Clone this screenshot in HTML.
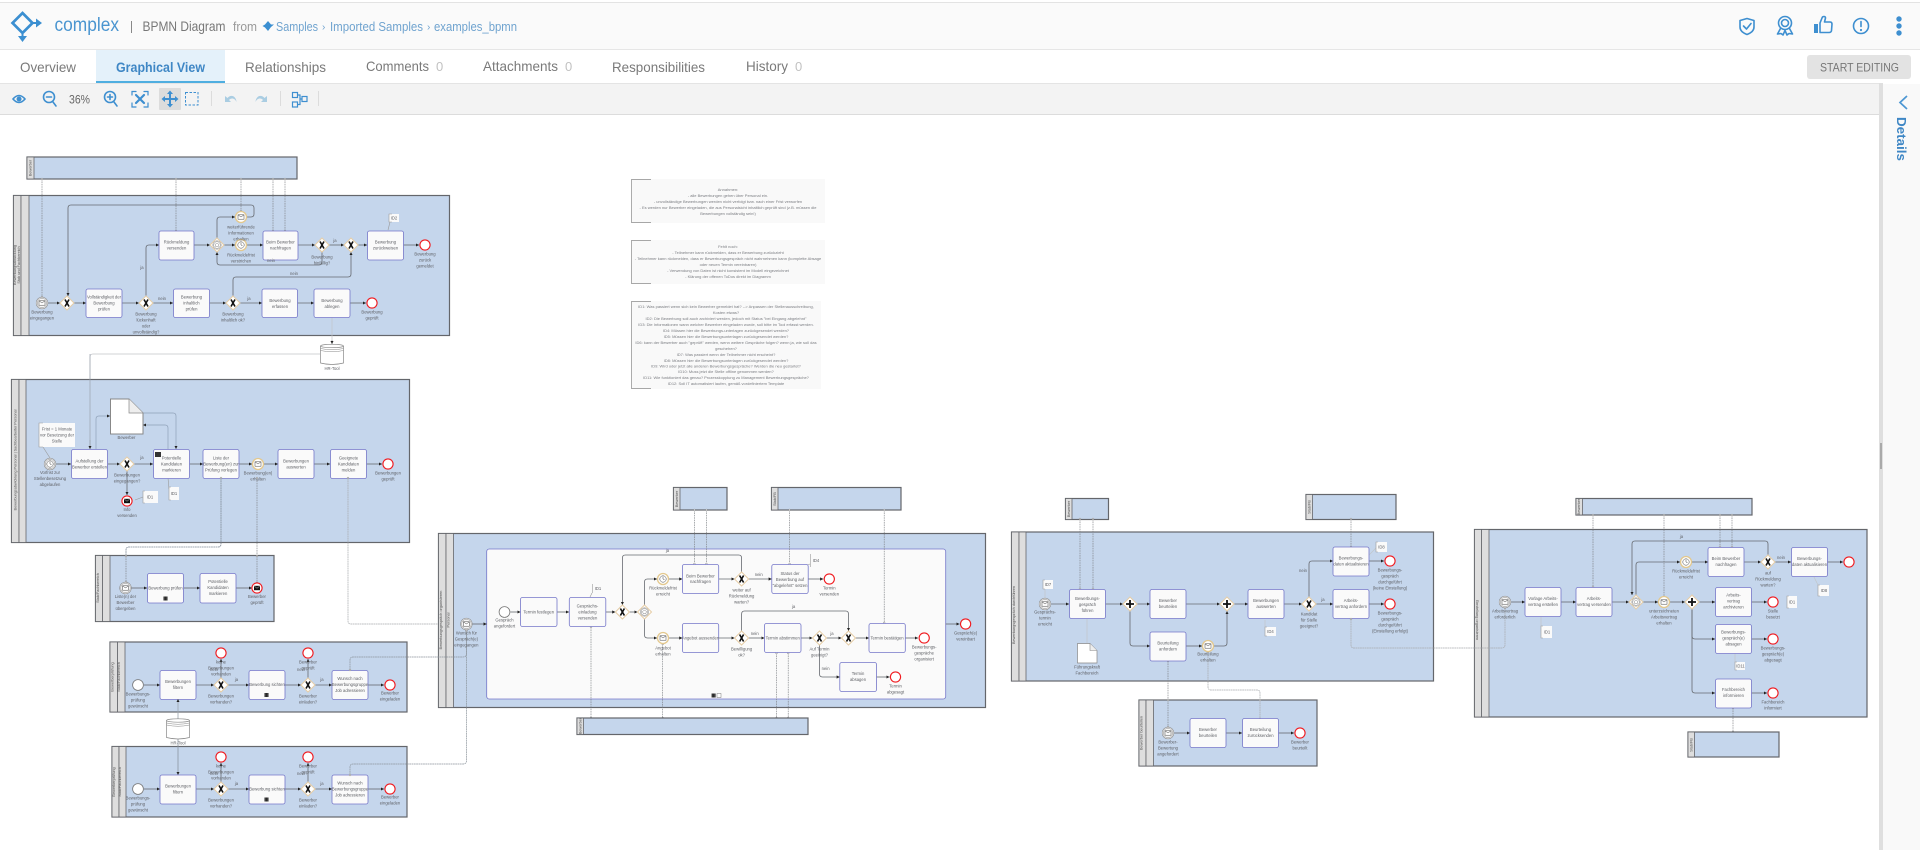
<!DOCTYPE html>
<html lang="de"><head><meta charset="utf-8"><title>complex - BPMN Diagram</title>
<style>
html,body{margin:0;padding:0;width:1920px;height:850px;overflow:hidden;background:#fff}
svg{position:absolute;left:0;top:0}
#d{filter:blur(.3px)}
#d text{font:4.2px "Liberation Sans",sans-serif;fill:#5f6166;text-anchor:middle}
#d .b text{font-size:4px;fill:#7b7d82}
#d text.v{font-size:3.8px;fill:#555}
.p{fill:#c5d6ec;stroke:#64666b;stroke-width:1.2}
.q{fill:#dedede;stroke:#64666b;stroke-width:.8}
.t{fill:#fafafa;stroke:#7577c9;stroke-width:.8}
.f{fill:none;stroke:#666a70;stroke-width:.8;marker-end:url(#a)}
.m{fill:none;stroke:#777a7e;stroke-width:.6;stroke-dasharray:1.6 .8;marker-start:url(#o);marker-mid:url(#o);marker-end:url(#o)}
.l{fill:none;stroke:#c2c5c9;stroke-width:.7}
.ld{fill:none;stroke:#a8abae;stroke-width:.7;stroke-dasharray:1.8 .5;marker-start:url(#o);marker-end:url(#o)}
.n{fill:#fafafa}
.k{fill:none;stroke:#999;stroke-width:.6}
#c text{font-family:"Liberation Sans",sans-serif}
</style></head><body>
<svg id="d" width="1920" height="850" viewBox="0 0 1920 850">
<defs>
<marker id="a" markerUnits="userSpaceOnUse" markerWidth="4" markerHeight="4" refX="3.2" refY="1.6" orient="auto"><path d="M0,0L3.2,1.6L0,3.2z" fill="#222"/></marker>
<marker id="o" markerUnits="userSpaceOnUse" markerWidth="3" markerHeight="3" refX="1.5" refY="1.5"><circle cx="1.5" cy="1.5" r=".9" fill="#fff" stroke="#666" stroke-width=".4"/></marker>
<g id="gx"><polygon points="0,-7 7,0 0,7 -7,0" fill="#fff" stroke="#e6cda6"/><path d="M-2,-3.5L2,3.5M2,-3.5L-2,3.5" stroke="#111" stroke-width="1.6"/></g>
<g id="gp"><polygon points="0,-7 7,0 0,7 -7,0" fill="#fff" stroke="#e6cda6"/><path d="M-4,0H4M0,-4V4" stroke="#111" stroke-width="1.8"/></g>
<g id="ge"><polygon points="0,-7 7,0 0,7 -7,0" fill="#fff" stroke="#e6cda6"/><circle r="4.2" fill="none" stroke="#888" stroke-width=".5"/><circle r="3.3" fill="none" stroke="#888" stroke-width=".5"/><polygon points="0,-2 2,-.5 1.2,1.7 -1.2,1.7 -2,-.5" fill="none" stroke="#888" stroke-width=".5"/></g>
<g id="s"><circle r="5.4" fill="#fff" stroke="#777" stroke-width=".8"/></g>
<g id="e"><circle r="5.1" fill="#fff" stroke="#f01a1f" stroke-width="1.1"/></g>
<g id="env"><rect x="-3" y="-2.2" width="6" height="4.4" fill="#fff" stroke="#444" stroke-width=".5"/><path d="M-3,-2.2L0,0L3,-2.2" fill="none" stroke="#444" stroke-width=".5"/></g>
<g id="clk"><circle r="3.2" fill="#fff" stroke="#444" stroke-width=".5"/><path d="M0,-2.4V0L1.5,.8" fill="none" stroke="#444" stroke-width=".5"/></g>
<g id="sm"><circle r="5.8" fill="#fff" stroke="#888" stroke-width=".6"/><circle r="4.8" fill="#f5f5f5" stroke="#888" stroke-width=".5"/><use href="#env"/></g>
<g id="st"><circle r="5.8" fill="#fff" stroke="#888" stroke-width=".6"/><circle r="4.8" fill="#f5f5f5" stroke="#888" stroke-width=".5"/><use href="#clk"/></g>
<g id="im"><circle r="5.5" fill="#fff" stroke="#e3c88e" stroke-width="1.3"/><use href="#env"/></g>
<g id="it"><circle r="5.5" fill="#fff" stroke="#e3c88e" stroke-width="1.3"/><use href="#clk"/></g>
<g id="em"><circle r="5.1" fill="#fff" stroke="#f01a1f" stroke-width="1.1"/><rect x="-3" y="-2.2" width="6" height="4.4" fill="#111"/><path d="M-3,-2.2L0,.3L3,-2.2" fill="none" stroke="#fff" stroke-width=".4"/></g>
<g id="ds"><path d="M0,2V19Q11.5,22 23,19V2" fill="#fff" stroke="#888" stroke-width=".7"/><ellipse cx="11.5" cy="2" rx="11.5" ry="1.7" fill="#fff" stroke="#888" stroke-width=".7"/><path d="M0,4.5Q11.5,7 23,4.5M0,6.5Q11.5,9 23,6.5" fill="none" stroke="#888" stroke-width=".5"/></g>
<g id="mk"><rect x="-2" y="-2" width="4" height="4" fill="#222"/><path d="M-.7,-2V2M.7,-2V2" stroke="#888" stroke-width=".3"/></g>
</defs>

<!-- Pool Bewerber top -->
<rect class="p" x="27" y="157" width="270" height="22"/><rect class="q" x="27" y="157" width="7" height="22"/>
<text class="v" transform="translate(31.500,168) rotate(-90)">Bewerber</text>

<!-- Pool 1 -->
<rect class="p" x="13.500" y="195.500" width="436" height="140"/><rect class="q" x="13.500" y="195.500" width="7.500" height="140"/><rect class="q" x="21" y="195.500" width="8" height="140"/>
<text class="v" transform="translate(16,265) rotate(-90)">Bewerbungsabwicklung</text><text class="v" transform="translate(20,265) rotate(-90)">Stab und Fachbereich</text>
<g>
<path class="m" d="M42,179V297M176,179V231M241,179V211M273,179V231M285,179V231"/>
<path class="f" d="M48,303H60"/><path class="f" d="M74,303H86"/><path class="f" d="M122,303H139"/><path class="f" d="M153,303H173"/><path class="f" d="M209,303H226"/><path class="f" d="M240,303H262"/><path class="f" d="M297,303H314"/><path class="f" d="M350,303H366"/>
<path class="f" d="M146,296V248Q146,245 149,245H159"/>
<path class="f" d="M194,245H210"/><path class="f" d="M224,245H235"/><path class="f" d="M247,245H263"/><path class="f" d="M298,245H315"/><path class="f" d="M329,245H344"/><path class="f" d="M358,245H367"/><path class="f" d="M403,245H419"/>
<path class="f" d="M217,238V220Q217,217 220,217H235"/>
<path class="f" d="M247,217H251Q254,217 254,214V208Q254,205 251,205H71Q68,205 68,208V296"/>
<path class="f" d="M322,252V262Q322,265 319,265H220Q217,265 217,262V252"/>
<path class="f" d="M233,296V280Q233,277 236,277H348Q351,277 351,274V252"/>
<path class="l" d="M332,317V344"/>
<path class="k" d="M388,230L390,222"/>
</g>
<rect class="t" x="159" y="231" width="35" height="29" rx="2"/><text x="176.500" y="243.500">Rückmeldung</text><text x="176.500" y="249.500">versenden</text>
<rect class="t" x="263" y="231" width="35" height="29" rx="2"/><text x="280.500" y="243.500">Beim Bewerber</text><text x="280.500" y="249.500">nachfragen</text>
<rect class="t" x="367.500" y="231" width="36" height="29" rx="2"/><text x="385.500" y="243.500">Bewerbung</text><text x="385.500" y="249.500">zurückweisen</text>
<rect class="t" x="86" y="289" width="36" height="28.500" rx="2"/><text x="104" y="298.500">Vollständigkeit der</text><text x="104" y="304.500">Bewerbung</text><text x="104" y="310.500">prüfen</text>
<rect class="t" x="173.500" y="289" width="36" height="28.500" rx="2"/><text x="191.500" y="298.500">Bewerbung</text><text x="191.500" y="304.500">inhaltlich</text><text x="191.500" y="310.500">prüfen</text>
<rect class="t" x="262" y="289" width="35.500" height="28.500" rx="2"/><text x="280" y="302">Bewerbung</text><text x="280" y="308">erfassen</text>
<rect class="t" x="314" y="289" width="36" height="28.500" rx="2"/><text x="332" y="302">Bewerbung</text><text x="332" y="308">ablegen</text>
<use href="#sm" x="42" y="303"/><use href="#gx" x="67" y="303"/><use href="#gx" x="146" y="303"/><use href="#gx" x="233" y="303"/><use href="#e" x="372" y="303"/>
<use href="#ge" x="217" y="245"/><use href="#im" x="241" y="217"/><use href="#it" x="241" y="245"/><use href="#gx" x="322" y="245"/><use href="#gx" x="351" y="245"/><use href="#e" x="425" y="245"/>
<text x="42" y="313.500">Bewerbung</text><text x="42" y="319.500">eingegangen</text>
<text x="146" y="315.500">Bewerbung</text><text x="146" y="321.500">lückenhaft</text><text x="146" y="327.500">oder</text><text x="146" y="333.500">unvollständig?</text>
<text x="233" y="315.500">Bewerbung</text><text x="233" y="321.500">inhaltlich ok?</text>
<text x="372" y="313.500">Bewerbung</text><text x="372" y="319.500">geprüft</text>
<text x="241" y="228.500">weiterführende</text><text x="241" y="234.500">Informationen</text><text x="241" y="240.500">erhalten</text>
<text x="241" y="256.500">Rückmeldefrist</text><text x="241" y="262.500">verstrichen</text>
<text x="322" y="258.500">Bewerbung</text><text x="322" y="264.500">hinfällig?</text><text x="271" y="262">nein</text>
<text x="425" y="255.500">Bewerbung</text><text x="425" y="261.500">zurück</text><text x="425" y="267.500">gemeldet</text>
<text x="142" y="269">ja</text><text x="162" y="300">nein</text><text x="249" y="300">ja</text><text x="335" y="242">ja</text><text x="294" y="275">nein</text>
<rect class="n" x="389" y="214" width="10" height="8"/><path class="k" d="M392,214H389V222H392"/><text x="394" y="219.500">ID2</text>

<!-- datastore HR Tool -->
<path class="l" d="M320,354H93Q90,354 90,357V447"/>
<path class="f" d="M332,340V344" style="stroke-width:.4"/>
<use href="#ds" x="320.500" y="344"/><text x="332" y="370">HR-Tool</text>

<!-- Pool 2 -->
<rect class="p" x="11.500" y="379.500" width="398" height="163"/><rect class="q" x="11.500" y="379.500" width="7.500" height="163"/><rect class="q" x="19" y="379.500" width="7" height="163"/>
<text class="v" transform="translate(16.500,460) rotate(-90)">Bewerbungsabwicklung Personal | Sachbearbeiter Personal</text>
<path class="l" d="M90,354V447" style="stroke:#9aa3ae"/>
<path class="f" d="M90,440V449" style="stroke:#9aa3ae"/>
<path class="f" d="M56,464H71"/><path class="f" d="M108,464H120"/><path class="f" d="M134,464H153"/><path class="f" d="M189,464H203"/><path class="f" d="M239,464H252"/><path class="f" d="M264,464H278"/><path class="f" d="M314,464H330"/><path class="f" d="M366,464H382"/><path class="f" d="M127,471V495"/>
<path class="l" style="stroke:#8fa1b8;marker-end:url(#a)" d="M96,449V419Q96,416 99,416H110"/>
<path class="l" style="stroke:#8fa1b8;marker-end:url(#a)" d="M143,413H173Q176,413 176,416V449"/>
<path class="l" style="stroke:#8fa1b8;marker-end:url(#a)" d="M168,449V428Q168,425 165,425H143"/>
<path class="k" d="M50,458L43,447M143,497L135,500M169,489L168,478"/>
<path d="M110.500,399H129L143,413V434H110.500z" fill="#fff" stroke="#888"/><path d="M129,399V413H143" fill="#eee" stroke="#888" stroke-width=".7"/><text x="126.500" y="439">Bewerber</text>
<rect class="n" x="39" y="423" width="36" height="24"/><path class="k" d="M43,423H39V447H43"/><text x="57" y="430.500">Frist = 1 Monate</text><text x="57" y="436.500">vor Besetzung der</text><text x="57" y="442.500">Stelle</text>
<rect class="t" x="71.500" y="449.500" width="36" height="29" rx="2"/><text x="89.500" y="462.500">Aufstellung der</text><text x="89.500" y="468.500">Bewerber erstellen</text>
<rect class="t" x="153.500" y="449.500" width="36" height="29" rx="2"/><rect x="155" y="452" width="6" height="5" fill="#333"/><text x="171.500" y="459.500">Potentielle</text><text x="171.500" y="465.500">Kandidaten</text><text x="171.500" y="471.500">markieren</text>
<rect class="t" x="203" y="449.500" width="36" height="29" rx="2"/><text x="221" y="459.500">Liste der</text><text x="221" y="465.500">Bewerbung(en) zur</text><text x="221" y="471.500">Prüfung vorlegen</text>
<rect class="t" x="278" y="449.500" width="36" height="29" rx="2"/><text x="296" y="462.500">Bewerbungen</text><text x="296" y="468.500">auswerten</text>
<rect class="t" x="330.500" y="449.500" width="36" height="29" rx="2"/><text x="348.500" y="459.500">Geeignete</text><text x="348.500" y="465.500">Kandidaten</text><text x="348.500" y="471.500">melden</text>
<use href="#st" x="50" y="464"/><use href="#gx" x="127" y="464"/><use href="#im" x="258" y="464"/><use href="#e" x="388" y="464"/><use href="#em" x="127" y="501"/>
<text x="50" y="474">Vorfrist zur</text><text x="50" y="480">Stellenbesetzung</text><text x="50" y="486">abgelaufen</text>
<text x="127" y="476.500">Bewerbungen</text><text x="127" y="482.500">eingegangen?</text><text x="142" y="459">ja</text>
<text x="258" y="474.500">Bewerbung(en)</text><text x="258" y="480.500">erhalten</text>
<text x="388" y="474.500">Bewerbungen</text><text x="388" y="480.500">geprüft</text>
<text x="127" y="511">Info</text><text x="127" y="517">versenden</text>
<rect class="n" x="143" y="491" width="15" height="12"/><path class="k" d="M145,491H143V503H145"/><text x="150" y="498.500">ID1</text>
<rect class="n" x="169" y="487" width="10" height="13"/><path class="k" d="M171,487H169V500H171"/><text x="174" y="495">ID1</text>

<!-- message flows around pool 2/3 -->
<path class="ld" style="stroke:#7f8a97;stroke-width:.8" d="M221,478V544Q221,547 218,547H129Q126,547 126,550V582"/>
<path class="m" d="M257,478V583"/>
<path class="ld" d="M348,478V621Q348,624 351,624H460"/>

<!-- Pool 3 -->
<rect class="p" x="95.500" y="555.500" width="178.500" height="66"/><rect class="q" x="95.500" y="555.500" width="7" height="66"/><rect class="q" x="102.500" y="555.500" width="7.500" height="66"/>
<text class="v" transform="translate(99,588) rotate(-90)">Stab/Fachbereich</text>
<path class="m" d="M126,556V582M257,556V583"/>
<path class="f" d="M131,588H147"/><path class="f" d="M184,588H200"/><path class="f" d="M236,588H252"/>
<rect class="t" x="147.500" y="573.500" width="36" height="29.500" rx="2"/><text x="165.500" y="589.500">Bewerbung prüfen</text><use href="#mk" x="165.500" y="598.500"/>
<rect class="t" x="200" y="573.500" width="36" height="29.500" rx="2"/><text x="218" y="583">Potentielle</text><text x="218" y="589">Kandidaten</text><text x="218" y="595">markieren</text>
<use href="#sm" x="125.500" y="588"/><use href="#em" x="257" y="588"/>
<text x="125.500" y="598">Liste(n) der</text><text x="125.500" y="604">Bewerber</text><text x="125.500" y="610">übergeben</text>
<text x="257" y="598">Bewerber</text><text x="257" y="604">geprüft</text>

<!-- Pool 4 -->
<rect class="p" x="110" y="642" width="297" height="70"/><rect class="q" x="110" y="642" width="7.500" height="70"/><rect class="q" x="117.500" y="642" width="7.500" height="70"/>
<text class="v" transform="translate(113.500,677) rotate(-90)">Bewerberprüfung</text><text class="v" transform="translate(120,677) rotate(-90)">Stab/Fachbereich</text>
<path class="f" d="M144,685H160"/><path class="f" d="M196,685H214"/><path class="f" d="M228,685H249"/><path class="f" d="M285,685H301"/><path class="f" d="M315,685H332"/><path class="f" d="M368,685H384"/><path class="f" d="M221,678V659"/><path class="f" d="M308,678V659"/>
<rect class="t" x="160" y="670.500" width="36" height="29" rx="2"/><text x="178" y="683">Bewerbungen</text><text x="178" y="689">filtern</text>
<rect class="t" x="249" y="670.500" width="36" height="29" rx="2"/><text x="267" y="686">Bewerbung sichten</text><use href="#mk" x="266.500" y="695"/>
<rect class="t" x="332" y="670.500" width="36" height="29" rx="2"/><text x="350" y="680">Wunsch nach</text><text x="350" y="686">Bewerbungsgruppe</text><text x="350" y="692">Job adressieren</text>
<use href="#s" x="138" y="685"/><use href="#gx" x="221" y="685"/><use href="#e" x="221" y="653"/><use href="#gx" x="308" y="685"/><use href="#e" x="308" y="653"/><use href="#e" x="390" y="685"/>
<text x="138" y="695.500">Bewerbungs-</text><text x="138" y="701.500">prüfung</text><text x="138" y="707.500">gewünscht</text>
<text x="221" y="697.500">Bewerbungen</text><text x="221" y="703.500">vorhanden?</text>
<text x="221" y="663.500">keine</text><text x="221" y="669.500">Bewerbungen</text><text x="221" y="675.500">vorhanden</text><text x="214" y="671">nein</text><text x="236.500" y="681">ja</text>
<text x="308" y="697.500">Bewerber</text><text x="308" y="703.500">einladen?</text>
<text x="308" y="663.500">Bewerber</text><text x="308" y="669.500">geprüft</text><text x="301" y="671">nein</text><text x="322" y="681">ja</text>
<text x="390" y="694.500">Bewerber</text><text x="390" y="700.500">eingeladen</text>

<!-- datastore -->
<path class="f" style="stroke:#9aa3ae" d="M178,719V699"/><path class="f" style="stroke:#8a94a0" d="M178,739V775"/>
<use href="#ds" x="166.500" y="718.500"/><text x="178" y="744.500">HR-Tool</text>

<!-- Pool 5 -->
<rect class="p" x="112" y="746.500" width="295" height="70.500"/><rect class="q" x="112" y="746.500" width="7" height="70.500"/><rect class="q" x="119" y="746.500" width="7" height="70.500"/>
<text class="v" transform="translate(115,782) rotate(-90)">Bewerberprüfung</text><text class="v" transform="translate(121,782) rotate(-90)">Stab/Fachbereich</text>
<path class="f" d="M144,789H160"/><path class="f" d="M196,789H214"/><path class="f" d="M228,789H249"/><path class="f" d="M285,789H301"/><path class="f" d="M315,789H332"/><path class="f" d="M368,789H384"/><path class="f" d="M221,782V763"/><path class="f" d="M308,782V763"/><path class="f" style="stroke:#8a94a0" d="M178,746V775"/>
<rect class="t" x="160" y="775" width="36" height="29" rx="2"/><text x="178" y="787.500">Bewerbungen</text><text x="178" y="793.500">filtern</text>
<rect class="t" x="249" y="775" width="36" height="29" rx="2"/><text x="267" y="790.500">Bewerbung sichten</text><use href="#mk" x="266.500" y="799.500"/>
<rect class="t" x="332" y="775" width="36" height="29" rx="2"/><text x="350" y="784.500">Wunsch nach</text><text x="350" y="790.500">Bewerbungsgruppe</text><text x="350" y="796.500">Job adressieren</text>
<use href="#s" x="138" y="789"/><use href="#gx" x="221" y="789"/><use href="#e" x="221" y="757"/><use href="#gx" x="308" y="789"/><use href="#e" x="308" y="757"/><use href="#e" x="390" y="789"/>
<text x="138" y="799.500">Bewerbungs-</text><text x="138" y="805.500">prüfung</text><text x="138" y="811.500">gewünscht</text>
<text x="221" y="801.500">Bewerbungen</text><text x="221" y="807.500">vorhanden?</text>
<text x="221" y="767.500">keine</text><text x="221" y="773.500">Bewerbungen</text><text x="221" y="779.500">vorhanden</text><text x="214" y="775">nein</text><text x="236.500" y="785">ja</text>
<text x="308" y="801.500">Bewerber</text><text x="308" y="807.500">einladen?</text>
<text x="308" y="767.500">Bewerber</text><text x="308" y="773.500">geprüft</text><text x="301" y="775">nein</text><text x="322" y="785">ja</text>
<text x="390" y="798.500">Bewerber</text><text x="390" y="804.500">eingeladen</text>

<!-- text boxes -->
<g class="b">
<rect x="631" y="179" width="194" height="44" fill="#f9f9f9"/><path d="M651,179.500H631.500V222.500H651" fill="none" stroke="#8c8c8c" stroke-width=".7"/>
<text x="728" y="191">Annahmen:</text><text x="728" y="197">- alle Bewerbungen gehen über Personal ein.</text><text x="728" y="203">- unvollständige Bewerbungen werden nicht verfolgt bzw. nach einer Frist verworfen</text><text x="728" y="209">- Es werden nur Bewerber eingeladen, die aus Personalsicht inhaltlich geprüft sind (z.B. müssen die</text><text x="728" y="215">Bewerbungen vollständig sein!)</text>
<rect x="631" y="240" width="194" height="44" fill="#f9f9f9"/><path d="M651,240.500H631.500V283.500H651" fill="none" stroke="#8c8c8c" stroke-width=".7"/>
<text x="728" y="248">Fehlt noch:</text><text x="728" y="254">- Teilnehmer kann rückmelden, dass er Bewerbung zurückzieht</text><text x="728" y="260">- Teilnehmer kann rückmelden, dass er Bewerbungsgespräch nicht wahrnehmen kann (komplette Absage</text><text x="728" y="266">oder neuen Termin vereinbaren)</text><text x="728" y="272">- Verwendung von Daten ist nicht konsistent im Modell eingezeichnet</text><text x="728" y="278">- Klärung der offenen ToDos direkt im Diagramm</text>
<rect x="631" y="301" width="190" height="88" fill="#f9f9f9"/><path d="M651,301.500H631.500V388.500H651" fill="none" stroke="#8c8c8c" stroke-width=".7"/>
<text x="726" y="308">ID1: Was passiert wenn sich kein Bewerber gemeldet hat? --&gt; Anpassen der Stellenausschreibung,</text><text x="726" y="314">Kosten etwas?</text><text x="726" y="320">ID2: Die Bewerbung soll auch archiviert werden, jedoch mit Status "bei Eingang abgelehnt"</text><text x="726" y="326">ID3: Die Informationen wann welcher Bewerber eingeladen wurde, soll bitte im Tool erfasst werden.</text><text x="726" y="332">ID4: Müssen hier die Bewerbungs-unterlagen zurückgesendet werden?</text><text x="726" y="338">ID5: Müssen hier die Bewerbungsunterlagen zurückgesendet werden?</text><text x="726" y="344">ID6: kann der Bewerber auch "geprüft" werden, wenn weitere Gespräche folgen? wenn ja, wie soll das</text><text x="726" y="350">geschehen?</text><text x="726" y="356">ID7: Was passiert wenn der Teilnehmer nicht erscheint?</text><text x="726" y="362">ID8: Müssen hier die Bewerbungsunterlagen zurückgesendet werden?</text><text x="726" y="367.500">ID9: Wird oder jetzt alle anderen Bewerbungsgespräche? Werden die neu gestartet?</text><text x="726" y="373">ID10: Muss jetzt die Stelle offline genommen werden?</text><text x="726" y="379">ID11: Wie funktioniert das genau? Prozesskopplung zu Management Bewerbungsgespräche?</text><text x="726" y="385">ID12: Soll IT automatisiert laufen, gemäß vordefiniertem Template</text>
</g>

<!-- top pools of pool 6 -->
<rect class="p" x="673.500" y="487.500" width="53.500" height="22.500"/><rect class="q" x="673.500" y="487.500" width="6.500" height="22.500"/><text class="v" transform="translate(678,499) rotate(-90)">Bewerber</text>
<rect class="p" x="771.500" y="487.500" width="129.500" height="22.500"/><rect class="q" x="771.500" y="487.500" width="6.500" height="22.500"/><text class="v" transform="translate(776,499) rotate(-90)">Stab/FB</text>
<!-- Pool 6 -->
<rect class="p" x="438.500" y="533.500" width="547" height="174"/><rect class="q" x="438.500" y="533.500" width="7.500" height="174"/><rect class="q" x="446" y="533.500" width="7.500" height="174"/>
<text class="v" transform="translate(442,620) rotate(-90)">Bewerbungsgespräch organisieren</text><text class="v" transform="translate(449.500,620) rotate(-90)">Personal</text>
<rect x="486.700" y="549" width="459" height="150" rx="2.500" fill="#fafafa" stroke="#7577c9" stroke-width=".8"/>
<path class="ld" style="stroke:#8c949c" d="M350,670V660Q350,657 353,657H463Q466.400,657 466.400,654V631"/>
<path class="ld" style="stroke:#8c949c" d="M350,775V767Q350,764 353,764H463Q466.400,764 466.400,761V630"/>
<path class="m" d="M694.400,510V564M706.400,510V564M789.600,510V564M884.200,510V623M591,627V718M662.700,644V718M776.500,653V718M788.200,653V718"/>
<path class="f" d="M472.500,624H486.700"/><path class="f" d="M945.700,624H959.500"/>
<path class="f" d="M510.500,612H520.500"/><path class="f" d="M557,612H569"/><path class="f" d="M605.600,612H615.400"/><path class="f" d="M629.400,612H637.500"/><path class="f" d="M669,579H682.400"/><path class="f" d="M669,638H682.400"/><path class="f" d="M718.700,579H734.600"/><path class="f" d="M748.600,579H771.800"/><path class="f" d="M808.200,579H823.300"/><path class="f" d="M718.700,638H734.600"/><path class="f" d="M748.600,638H764.500"/><path class="f" d="M801,638H812.500"/><path class="f" d="M826.500,638H841.500"/><path class="f" d="M855.500,638H869"/><path class="f" d="M905.300,638H918"/><path class="f" d="M876.500,677H889.500"/>
<path class="f" d="M741.600,572V558Q741.600,555 738.600,555H625.400Q622.400,555 622.400,558V605"/>
<path class="f" d="M644.500,605V582Q644.500,579 647.500,579H657"/>
<path class="f" d="M644.500,619V635Q644.500,638 647.500,638H657"/>
<path class="f" d="M741.600,631V614Q741.600,611 744.600,611H845.500Q848.500,611 848.500,614V631"/>
<path class="f" d="M819.500,645V674Q819.500,677 822.500,677H839.800"/>
<path class="k" d="M592,593L590,597M810,564L807,565"/>
<rect class="t" x="520.500" y="597.500" width="36.500" height="29" rx="2"/><text x="538.700" y="613.500">Termin festlegen</text>
<rect class="t" x="569.300" y="597.500" width="36.500" height="29" rx="2"/><text x="587.500" y="607.500">Gesprächs-</text><text x="587.500" y="613.500">einladung</text><text x="587.500" y="619.500">versenden</text>
<rect class="t" x="682.400" y="564.500" width="36.300" height="29" rx="2"/><text x="700.500" y="577.500">Beim Bewerber</text><text x="700.500" y="583">nachfragen</text>
<rect class="t" x="682.400" y="623.500" width="36.300" height="29" rx="2"/><text x="700.500" y="639.500">Angebot aussenden</text>
<rect class="t" x="771.800" y="564.500" width="36.400" height="29" rx="2"/><text x="790" y="575">Status der</text><text x="790" y="581">Bewerbung auf</text><text x="790" y="587">"abgelehnt" setzen</text>
<rect class="t" x="764.500" y="623.500" width="36.500" height="29" rx="2"/><text x="782.700" y="639.500">Termin abstimmen</text>
<rect class="t" x="869" y="623.500" width="36.300" height="29" rx="2"/><text x="887" y="639.500">Termin bestätigen</text>
<rect class="t" x="839.800" y="662.500" width="36.700" height="29" rx="2"/><text x="858" y="675">Termin</text><text x="858" y="681">absagen</text>
<use href="#sm" x="466.400" y="624"/><use href="#e" x="965.600" y="624"/><use href="#s" x="504.500" y="612"/><use href="#gx" x="622.400" y="612"/><use href="#ge" x="644.500" y="612"/><use href="#it" x="663" y="579"/><use href="#im" x="663" y="638"/><use href="#gx" x="741.600" y="579"/><use href="#e" x="829.300" y="579"/><use href="#gx" x="741.600" y="638"/><use href="#gx" x="819.500" y="638"/><use href="#gx" x="848.500" y="638"/><use href="#e" x="924.200" y="638"/><use href="#e" x="895.500" y="677"/>
<text x="466.400" y="634.500">Wunsch für</text><text x="466.400" y="640.500">Gespräch(e)</text><text x="466.400" y="646.500">eingegangen</text>
<text x="965.600" y="634.500">Gespräch(e)</text><text x="965.600" y="640.500">vereinbart</text>
<text x="504.500" y="621.500">Gespräch</text><text x="504.500" y="627.500">angefordert</text>
<text x="663" y="589.500">Rückmeldefrist</text><text x="663" y="595.500">erreicht</text>
<text x="663" y="649.500">Angebot</text><text x="663" y="655.500">erhalten</text>
<text x="741.600" y="591.500">weiter auf</text><text x="741.600" y="597.500">Rückmeldung</text><text x="741.600" y="603.500">warten?</text>
<text x="829.300" y="589.500">Termin</text><text x="829.300" y="595.500">versenden</text>
<text x="741.600" y="650.500">Bewilligung</text><text x="741.600" y="656.500">ok?</text>
<text x="819.500" y="650.500">Auf Termin</text><text x="819.500" y="656.500">geeinigt?</text>
<text x="924.200" y="648.500">Bewerbungs-</text><text x="924.200" y="654.500">gespräche</text><text x="924.200" y="660.500">organisiert</text>
<text x="895.500" y="687.500">Termin</text><text x="895.500" y="693.500">abgesagt</text>
<text x="667.500" y="552">ja</text><text x="758.700" y="576">nein</text><text x="754.700" y="635">nein</text><text x="793.600" y="608">ja</text><text x="832" y="635">ja</text><text x="825.600" y="670">nein</text>
<path class="k" d="M592.500,584V593M810.500,554V567"/><text x="598" y="590">ID1</text><text x="816" y="562">ID4</text>
<use href="#mk" x="713.600" y="695.500"/><rect x="717" y="693.500" width="4" height="4" fill="#fff" stroke="#555" stroke-width=".4"/>
<!-- pool under 6 -->
<rect class="p" x="577" y="718" width="231" height="16.500"/><rect class="q" x="577" y="718" width="6.500" height="16.500"/><text class="v" transform="translate(581.500,726) rotate(-90)">Bewerber</text>

<!-- Pool 7 top pools -->
<rect class="p" x="1065.500" y="498.500" width="43" height="21"/><rect class="q" x="1065.500" y="498.500" width="6.500" height="21"/><text class="v" transform="translate(1070,509) rotate(-90)">Bewerber</text>
<rect class="p" x="1306" y="494.500" width="90" height="25"/><rect class="q" x="1306" y="494.500" width="6.500" height="25"/><text class="v" transform="translate(1310.500,507) rotate(-90)">Stab/FB</text>
<!-- Pool 7 -->
<rect class="p" x="1011.500" y="532" width="422" height="149"/><rect class="q" x="1011.500" y="532" width="7.500" height="149"/><rect class="q" x="1019" y="532" width="7" height="149"/>
<text class="v" transform="translate(1015,615) rotate(-90)">Bewerbungsgespräch durchführen</text>
<path class="m" d="M1080,519V589M1093,519V589M1351,519V547M1168,661V727"/>
<path class="ld" d="M1260,719V693Q1260,690 1257,690H1211Q1208,690 1208,687V652"/>
<path class="l" d="M1087,619V643M1265,627V620M1376,548L1369,555M1045,589V598"/>
<path class="f" d="M1051,604H1069"/><path class="f" d="M1105,604H1123"/><path class="f" d="M1137,604H1150"/><path class="f" d="M1186,604H1220"/><path class="f" d="M1234,604H1248"/><path class="f" d="M1284,604H1302"/><path class="f" d="M1316,604H1333"/><path class="f" d="M1369,604H1384"/><path class="f" d="M1369,561H1384"/><path class="f" d="M1186,646H1202"/>
<path class="f" d="M1214,646H1224Q1227,646 1227,643V611"/><path class="f" d="M1130,611V643Q1130,646 1133,646H1150"/><path class="f" d="M1309,597V564Q1309,561 1312,561H1333"/>
<rect class="t" x="1069.500" y="589.500" width="36" height="29" rx="2"/><text x="1087.500" y="600">Bewerbungs-</text><text x="1087.500" y="606">gespräch</text><text x="1087.500" y="612">führen</text>
<rect class="t" x="1150" y="589.500" width="36" height="29" rx="2"/><text x="1168" y="602">Bewerber</text><text x="1168" y="608">beurteilen</text>
<rect class="t" x="1150" y="632" width="36" height="29" rx="2"/><text x="1168" y="644.500">Beurteilung</text><text x="1168" y="650.500">anfordern</text>
<rect class="t" x="1248" y="589.500" width="36" height="29" rx="2"/><text x="1266" y="602">Bewerbungen</text><text x="1266" y="608">auswerten</text>
<rect class="t" x="1333" y="589.500" width="36" height="29" rx="2"/><text x="1351" y="602">Arbeits-</text><text x="1351" y="608">vertrag anfordern</text>
<rect class="t" x="1333" y="547" width="36" height="29" rx="2"/><text x="1351" y="559.500">Bewerbungs-</text><text x="1351" y="565.500">daten aktualisieren</text>
<use href="#sm" x="1045" y="604"/><use href="#gp" x="1130" y="604"/><use href="#gp" x="1227" y="604"/><use href="#im" x="1208" y="646"/><use href="#gx" x="1309" y="604"/><use href="#e" x="1390" y="561"/><use href="#e" x="1390" y="604"/>
<text x="1045" y="613.500">Gesprächs-</text><text x="1045" y="619.500">termin</text><text x="1045" y="625.500">erreicht</text>
<text x="1208" y="655.500">Beurteilung</text><text x="1208" y="661.500">erhalten</text>
<text x="1309" y="615.500">Kandidat</text><text x="1309" y="621.500">für Stelle</text><text x="1309" y="627.500">geeignet?</text>
<text x="1303" y="572">nein</text><text x="1323" y="601">ja</text>
<text x="1390" y="571.500">Bewerbungs-</text><text x="1390" y="577.500">gespräch</text><text x="1390" y="583.500">durchgeführt</text><text x="1390" y="589.500">(keine Einstellung)</text>
<text x="1390" y="614.500">Bewerbungs-</text><text x="1390" y="620.500">gespräch</text><text x="1390" y="626.500">durchgeführt</text><text x="1390" y="632.500">(Einstellung erfolgt)</text>
<path d="M1077.500,643.500H1090L1097,650.500V663H1077.500z" fill="#fff" stroke="#888" stroke-width=".7"/><path d="M1090,643.500V650.500H1097" fill="#eee" stroke="#888" stroke-width=".6"/>
<text x="1087" y="668.500">Führungskraft</text><text x="1087" y="674.500">Fachbereich</text>
<rect class="n" x="1043" y="580" width="10" height="9"/><path class="k" d="M1045,580H1043V589H1045"/><text x="1048" y="586">ID7</text>
<rect class="n" x="1376" y="542" width="11" height="10"/><path class="k" d="M1378,542H1376V552H1378"/><text x="1381.500" y="548.500">ID8</text>
<rect class="n" x="1265" y="627" width="11" height="9"/><path class="k" d="M1267,627H1265V636H1267"/><text x="1270.500" y="633">ID4</text>

<!-- Pool 8 -->
<rect class="p" x="1139" y="700" width="178" height="66"/><rect class="q" x="1139" y="700" width="7" height="66"/><rect class="q" x="1146" y="700" width="7.500" height="66"/>
<text class="v" transform="translate(1142.500,733) rotate(-90)">Bewerber beurteilen</text>
<path class="m" d="M1168,700V727"/>
<path class="ld" d="M1260,700V719"/>
<path class="f" d="M1174,733H1190"/><path class="f" d="M1226,733H1242"/><path class="f" d="M1278,733H1294"/>
<rect class="t" x="1190" y="718.500" width="36" height="29" rx="2"/><text x="1208" y="731">Bewerber</text><text x="1208" y="737">beurteilen</text>
<rect class="t" x="1242.500" y="718.500" width="36" height="29" rx="2"/><text x="1260.500" y="731">Beurteilung</text><text x="1260.500" y="737">zurücksenden</text>
<use href="#sm" x="1168" y="733"/><use href="#e" x="1300" y="733"/>
<text x="1168" y="743.500">Bewerber-</text><text x="1168" y="749.500">Bewertung</text><text x="1168" y="755.500">angefordert</text>
<text x="1300" y="743.500">Bewerber</text><text x="1300" y="749.500">beurteilt</text>

<!-- Pool 9 -->
<rect class="p" x="1576" y="498.500" width="176" height="16.500"/><rect class="q" x="1576" y="498.500" width="6.500" height="16.500"/><text class="v" transform="translate(1580,507) rotate(-90)">Bewerber</text>
<rect class="p" x="1474.500" y="529.500" width="392.500" height="187.500"/><rect class="q" x="1474.500" y="529.500" width="7" height="187.500"/><rect class="q" x="1481.500" y="529.500" width="7.500" height="187.500"/>
<text class="v" transform="translate(1476,620) rotate(90)">Einstellung organisieren</text>
<path class="ld" d="M1351,619V645Q1351,648 1354,648H1502Q1505,648 1505,645V608"/>
<path class="m" d="M1593,515V587M1664,515V597M1720,515V547M1732,515V547M1733,708V732"/>
<path class="l" d="M1541,617V626M1735,653V662M1818,585L1814,577"/>
<path class="f" d="M1511,602H1525"/><path class="f" d="M1561,602H1576"/><path class="f" d="M1612,602H1629"/><path class="f" d="M1643,602H1658"/><path class="f" d="M1670,602H1685"/><path class="f" d="M1699,602H1715"/><path class="f" d="M1751,602H1767"/><path class="f" d="M1751,639H1767"/><path class="f" d="M1751,693H1767"/>
<path class="f" d="M1692,609V636Q1692,639 1695,639H1715"/><path class="f" d="M1692,609V690Q1692,693 1695,693H1715"/>
<path class="f" d="M1692,562H1708"/><path class="f" d="M1744,562H1761"/><path class="f" d="M1775,562H1791"/><path class="f" d="M1827,562H1843"/>
<path class="f" d="M1768,555V544Q1768,541 1765,541H1635Q1632,541 1632,544V595"/>
<path class="f" d="M1636,595V565Q1636,562 1639,562H1680"/>
<rect class="t" x="1525" y="587.500" width="36" height="29" rx="2"/><text x="1543" y="600">Vorlage Arbeits-</text><text x="1543" y="606">vertrag erstellen</text>
<rect class="t" x="1576" y="587.500" width="36" height="29" rx="2"/><text x="1594" y="600">Arbeits-</text><text x="1594" y="606">vertrag versenden</text>
<rect class="t" x="1715.500" y="587.500" width="36" height="29" rx="2"/><text x="1733.500" y="596.500">Arbeits-</text><text x="1733.500" y="602.500">vertrag</text><text x="1733.500" y="608.500">archivieren</text>
<rect class="t" x="1715.500" y="624.500" width="36" height="29" rx="2"/><text x="1733.500" y="633.500">Bewerbungs-</text><text x="1733.500" y="639.500">gespräch(e)</text><text x="1733.500" y="645.500">absagen</text>
<rect class="t" x="1715.500" y="679" width="36" height="29" rx="2"/><text x="1733.500" y="691">Fachbereich</text><text x="1733.500" y="697">informieren</text>
<rect class="t" x="1708" y="547.500" width="36" height="29" rx="2"/><text x="1726" y="560">Beim Bewerber</text><text x="1726" y="566">nachfragen</text>
<rect class="t" x="1791.500" y="547.500" width="36" height="29" rx="2"/><text x="1809.500" y="560">Bewerbungs-</text><text x="1809.500" y="566">daten aktualisieren</text>
<use href="#sm" x="1505" y="602"/><use href="#ge" x="1636" y="602"/><use href="#im" x="1664" y="602"/><use href="#gp" x="1692" y="602"/><use href="#e" x="1773" y="602"/><use href="#e" x="1773" y="639"/><use href="#e" x="1773" y="693"/><use href="#it" x="1686" y="562"/><use href="#gx" x="1768" y="562"/><use href="#e" x="1849" y="562"/>
<text x="1505" y="612.500">Arbeitsvertrag</text><text x="1505" y="618.500">erforderlich</text>
<text x="1664" y="612.500">unterzeichneten</text><text x="1664" y="618.500">Arbeitsvertrag</text><text x="1664" y="624.500">erhalten</text>
<text x="1686" y="572.500">Rückmeldefrist</text><text x="1686" y="578.500">erreicht</text>
<text x="1768" y="574.500">auf</text><text x="1768" y="580.500">Rückmeldung</text><text x="1768" y="586.500">warten?</text>
<text x="1781" y="559">nein</text><text x="1681.500" y="538">ja</text>
<text x="1773" y="612.500">Stelle</text><text x="1773" y="618.500">besetzt</text>
<text x="1773" y="649.500">Bewerbungs-</text><text x="1773" y="655.500">gespräch(e)</text><text x="1773" y="661.500">abgesagt</text>
<text x="1773" y="703.500">Fachbereich</text><text x="1773" y="709.500">informiert</text>
<rect class="n" x="1541" y="626" width="11" height="12"/><path class="k" d="M1543,626H1541V638H1543"/><text x="1547" y="633.500">ID1</text>
<rect class="n" x="1787" y="596" width="10" height="12"/><path class="k" d="M1789,596H1787V608H1789"/><text x="1792" y="603.500">ID1</text>
<rect class="n" x="1735" y="662" width="10" height="8"/><path class="k" d="M1737,662H1735V670H1737"/><text x="1740.500" y="667.500">ID11</text>
<rect class="n" x="1818" y="585" width="11" height="11"/><path class="k" d="M1820,585H1818V596H1820"/><text x="1824" y="592">ID8</text>
<rect class="p" x="1688" y="732" width="91" height="25"/><rect class="q" x="1688" y="732" width="6.500" height="25"/><text class="v" transform="translate(1692.500,745) rotate(-90)">Stab/FB</text>
</svg>

<svg id="c" width="1920" height="850" viewBox="0 0 1920 850">
<!-- header -->
<rect x="0" y="0" width="1920" height="2" fill="#fff"/>
<rect x="0" y="2" width="1920" height="1" fill="#e3e3e3"/>
<rect x="0" y="3" width="1920" height="46" fill="#fafafa"/>
<rect x="0" y="49" width="1920" height="1" fill="#e6e6e6"/>
<rect x="0" y="83" width="1879" height="1" fill="#e4e4e4"/>
<rect x="0" y="84" width="1879" height="30" fill="#f3f3f3"/>
<rect x="0" y="114" width="1879" height="1" fill="#dcdcdc"/>
<rect x="1879" y="83" width="4" height="767" fill="#dfdfdf"/>
<rect x="1883" y="84" width="37" height="766" fill="#f9f9f9"/>
<rect x="1880" y="443" width="2" height="26" fill="#aaa"/>
<!-- logo -->
<polygon points="22.500,13 32.500,23 22.500,33 12.500,23" fill="none" stroke="#3b8fd1" stroke-width="2.700"/>
<path d="M32,23H37M22.500,33V37" stroke="#3b8fd1" stroke-width="2"/>
<polygon points="36,18.500 42,23 36,27.500" fill="#3b8fd1"/><polygon points="18,36 27,36 22.500,42" fill="#3b8fd1"/>
<text x="54.500" y="31" font-size="19" fill="#4a95d0" textLength="64.500" lengthAdjust="spacingAndGlyphs">complex</text>
<rect x="131" y="21" width="1" height="12" fill="#888"/>
<text x="142.500" y="31" font-size="14" fill="#777" textLength="83" lengthAdjust="spacingAndGlyphs">BPMN Diagram</text>
<text x="233" y="31" font-size="13" fill="#999" textLength="24" lengthAdjust="spacingAndGlyphs">from</text>
<path d="M268,21L271,24.500H274L271,27L268,31L265,27.500L262.500,26L265,24.500z" fill="#3b8fd1"/>
<text x="276" y="31" font-size="13" fill="#6fa3cf" textLength="42" lengthAdjust="spacingAndGlyphs">Samples</text>
<text x="322" y="30" font-size="10" fill="#6fa3cf">›</text>
<text x="330" y="31" font-size="13" fill="#6fa3cf" textLength="93" lengthAdjust="spacingAndGlyphs">Imported Samples</text>
<text x="427" y="30" font-size="10" fill="#6fa3cf">›</text>
<text x="434" y="31" font-size="13" fill="#6fa3cf" textLength="83" lengthAdjust="spacingAndGlyphs">examples_bpmn</text>
<!-- header right icons -->
<g fill="none" stroke="#3e8fd0" stroke-width="1.600" stroke-linecap="round" stroke-linejoin="round">
<path d="M1747,18.500L1754,20.500V27C1754,30.500 1751,33 1747,34.500C1743,33 1740,30.500 1740,27V20.500z"/><path d="M1743.500,26L1746.500,29L1751,23.500"/>
<circle cx="1785" cy="23" r="6.500"/><circle cx="1785" cy="23" r="3.500"/><path d="M1780.500,28.500L1777.500,34L1781,33.500L1783,35L1785,30.500L1787,35L1789,33.500L1792.500,34L1789.500,28.500"/>
<path d="M1820,32.500H1829C1830.500,32.500 1831.500,31.500 1831.500,30.500L1832,24C1832,22.500 1831,22 1830,22H1824.500L1825.500,18C1825.500,16 1822.500,16 1822,18L1820,23V32.500"/>
<circle cx="1861" cy="26" r="7.500"/><path d="M1861,21.500V26.500"/>
</g>
<rect x="1814" y="24" width="4" height="9" fill="#3e8fd0"/>
<circle cx="1861" cy="30" r="1.100" fill="#3e8fd0"/>
<circle cx="1899" cy="19" r="2.700" fill="#3e8fd0"/><circle cx="1899" cy="26" r="2.700" fill="#3e8fd0"/><circle cx="1899" cy="33" r="2.700" fill="#3e8fd0"/>
<!-- tabs -->
<text x="20" y="72" font-size="14" fill="#7a7a7a" textLength="56" lengthAdjust="spacingAndGlyphs">Overview</text>
<rect x="96" y="50" width="129" height="31" fill="#e4f1fa"/><rect x="96" y="81" width="129" height="2" fill="#4faee0"/>
<text x="116" y="72" font-size="14" font-weight="bold" fill="#3f87c5" textLength="89" lengthAdjust="spacingAndGlyphs">Graphical View</text>
<text x="245" y="72" font-size="14" fill="#7a7a7a" textLength="81" lengthAdjust="spacingAndGlyphs">Relationships</text>
<text x="366" y="71" font-size="14" fill="#7a7a7a" textLength="63" lengthAdjust="spacingAndGlyphs">Comments</text><text x="436" y="71" font-size="13" fill="#c2c2c2">0</text>
<text x="483" y="71" font-size="14" fill="#7a7a7a" textLength="75" lengthAdjust="spacingAndGlyphs">Attachments</text><text x="565" y="71" font-size="13" fill="#c2c2c2">0</text>
<text x="612" y="72" font-size="14" fill="#7a7a7a" textLength="93" lengthAdjust="spacingAndGlyphs">Responsibilities</text>
<text x="746" y="71" font-size="14" fill="#7a7a7a" textLength="42" lengthAdjust="spacingAndGlyphs">History</text><text x="795" y="71" font-size="13" fill="#c2c2c2">0</text>
<!-- start editing -->
<rect x="1807" y="55" width="104" height="24" rx="3" fill="#e3e3e3"/>
<text x="1820" y="71.500" font-size="12" fill="#777" textLength="79" lengthAdjust="spacingAndGlyphs">START EDITING</text>
<!-- details -->
<path d="M1907,96L1900,102.500L1907,109" fill="none" stroke="#4d97d3" stroke-width="1.700"/>
<text transform="translate(1897,117) rotate(90)" font-size="13" font-weight="bold" fill="#3f87c5" textLength="44" lengthAdjust="spacingAndGlyphs">Details</text>
<!-- toolbar -->
<g fill="none" stroke="#3e8fd0" stroke-width="1.600" stroke-linecap="round">
<path d="M13,99Q19,92 25,99Q19,106 13,99z"/>
<circle cx="49" cy="97" r="5.500"/><path d="M53,102L56,106M46.500,97H51.500"/>
<circle cx="110" cy="97" r="5.500"/><path d="M114,102L117,106M107.500,97H112.500M110,94.500V99.500"/>
<path d="M132,95V91.500H136M144,91.500H148V95M148,103V107H144M136,107H132V103" stroke-width="1.200"/>
<path d="M136,95L144,103M144,95L136,103" stroke-width="2.200"/>
</g>
<path d="M19,96.500a2.500,2.500 0 1,0 .1,0z" fill="#3e8fd0"/>
<text x="69" y="103.500" font-size="12" fill="#666" textLength="21" lengthAdjust="spacingAndGlyphs">36%</text>
<rect x="159" y="88" width="22" height="22" rx="1" fill="#dcdcdc"/>
<path d="M170,90.500L173,94H171V98H175V96L178.500,99L175,102V100H171V104H173L170,107.500L167,104H169V100H165V102L161.500,99L165,96V98H169V94H167z" fill="#3e8fd0"/>
<rect x="185.500" y="92.500" width="12.500" height="12.500" fill="none" stroke="#3e8fd0" stroke-width="1" stroke-dasharray="2.500 1.500"/>
<rect x="211" y="91" width="1" height="15" fill="#dcdcdc"/>
<path d="M225,96V102H231L229,100C231,97.500 235,98 236.500,102C236,96 231,94 227.500,98z" fill="#aacde2"/>
<path d="M267,96V102H261L263,100C261,97.500 257,98 255.500,102C256,96 261,94 264.500,98z" fill="#aacde2"/>
<rect x="280" y="91" width="1" height="15" fill="#dcdcdc"/>
<g fill="none" stroke="#3e8fd0" stroke-width="1.200"><rect x="292.500" y="92.500" width="5" height="5"/><rect x="292.500" y="102" width="5" height="5"/><rect x="302" y="96.500" width="5" height="5"/><path d="M297.500,95H300V104.500H297.500M300,99H302"/></g>
<rect x="318" y="91" width="1" height="15" fill="#dcdcdc"/>
</svg>
</body></html>
